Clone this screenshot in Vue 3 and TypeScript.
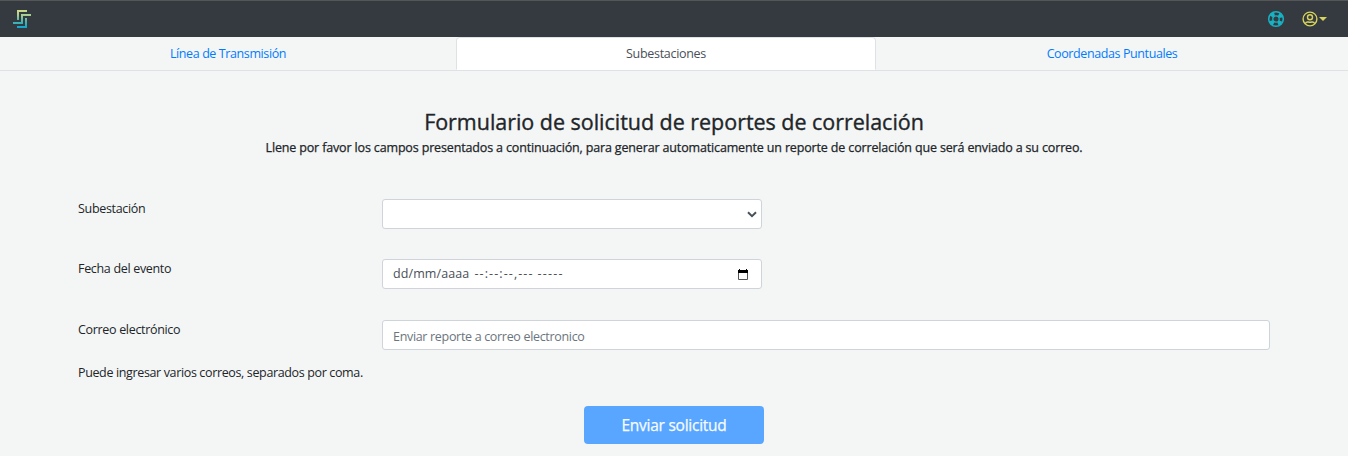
<script setup lang="ts">
import { ref } from 'vue'

interface Tab {
  id: string
  label: string
}

const tabs: Tab[] = [
  { id: 'linea', label: 'Línea de Transmisión' },
  { id: 'subestaciones', label: 'Subestaciones' },
  { id: 'coordenadas', label: 'Coordenadas Puntuales' },
]
const activeTab = ref<string>('subestaciones')
const email = ref<string>('')
</script>

<template>
  <div class="page">
    <header class="navbar">
      <svg class="logo" viewBox="0 0 20 20" width="20" height="20">
        <defs>
          <linearGradient id="brand" x1="0" y1="0" x2="0" y2="20" gradientUnits="userSpaceOnUse">
            <stop offset="0" stop-color="#d9dc80" />
            <stop offset="0.3" stop-color="#a9cf92" />
            <stop offset="0.6" stop-color="#4fb5ac" />
            <stop offset="1" stop-color="#00a5d6" />
          </linearGradient>
        </defs>
        <g fill="none" stroke="url(#brand)" stroke-width="2">
          <path d="M15 2H6V11" />
          <path d="M19 6H10V14H1" />
          <path d="M14 9V18H5" />
        </g>
      </svg>
      <div class="actions">
        <svg class="help" viewBox="0 0 18 18" width="18" height="18" fill="none" stroke="#17b3c4">
          <circle cx="9" cy="9" r="7.300" stroke-width="1.500" />
          <circle cx="9" cy="9" r="3.200" stroke-width="1.300" />
          <circle cx="9" cy="9" r="5.300" stroke-width="3.400" stroke-dasharray="3.900 4.425" stroke-dashoffset="-2.210" />
        </svg>
        <div class="user">
          <svg viewBox="0 0 16 16" width="16" height="16" fill="none" stroke="#d8d35c" stroke-width="1.400">
            <circle cx="8" cy="8" r="6.900" />
            <circle cx="8" cy="6.200" r="2.500" />
            <path d="M3.200 12.800C4 11 5.400 10.800 6.300 11c1.200.3 2.200.3 3.400 0 .9-.2 2.300 0 3.100 1.800" />
          </svg>
          <span class="caret"></span>
        </div>
      </div>
    </header>

    <nav class="tabs">
      <a
        v-for="tab in tabs"
        :key="tab.id"
        :class="['tab', tab.id, { active: tab.id === activeTab }]"
        @click="activeTab = tab.id"
      ><span>{{ tab.label }}</span></a>
    </nav>

    <main class="content">
      <h1><span>Formulario de solicitud de reportes de correlación</span></h1>
      <p class="lead"><span>Llene por favor los campos presentados a continuación, para generar automaticamente un reporte de correlación que será enviado a su correo.</span></p>

      <form class="form" @submit.prevent>
        <div class="row">
          <label for="station"><span>Subestación</span></label>
          <div class="control half">
            <select id="station"></select>
            <svg class="chevron" viewBox="0 0 10 7" width="10" height="7"><path d="M1 1.200L5 5.100L9 1.200" fill="none" stroke="#495057" stroke-width="2" /></svg>
          </div>
        </div>
        <div class="row">
          <label><span>Fecha del evento</span></label>
          <div class="control half date">
            <span class="day">dd/mm/aaaa</span><span class="time">--:--:--,---</span><span class="period">-----</span>
            <svg class="calendar" viewBox="0 0 10 11" width="10" height="11">
              <path d="M.5 2.500h9v8h-9z" fill="none" stroke="#555" />
              <path d="M0 1h10v3H0zM1 0h1v1H1zM8 0h1v1H8z" fill="#000" />
            </svg>
          </div>
        </div>
        <div class="row email-row">
          <label for="email"><span>Correo electrónico</span></label>
          <div class="control"><input id="email" v-model="email" placeholder="Enviar reporte a correo electronico" /></div>
        </div>
        <p class="hint"><span>Puede ingresar varios correos, separados por coma.</span></p>
        <button class="submit"><span>Enviar solicitud</span></button>
      </form>
    </main>
  </div>
</template>

<style>
body {
  margin: 0;
  background: #f4f6f5;
}
</style>

<style scoped>
* {
  box-sizing: border-box;
}
.page {
  height: 456px;
  overflow: hidden;
  background: #f4f6f5;
  color: #212529;
  font: 12.5px/20px 'Open Sans', 'Noto Sans', sans-serif;
}
.navbar {
  display: flex;
  justify-content: space-between;
  align-items: center;
  height: 37px;
  padding: 0 21px 0 12px;
  background: #343a40;
  border-top: 1px solid #555756;
}
.logo {
  display: block;
}
.actions,
.user {
  display: flex;
  align-items: center;
}
.actions {
  gap: 17px;
}
.user {
  gap: 1px;
  margin-top: -1px;
}
.caret {
  border: 4px solid transparent;
  border-top: 4px solid #d8d35c;
  border-bottom: 0;
}
.tabs {
  display: grid;
  grid-template-columns: 456px 420px 1fr;
  height: 34px;
  border-bottom: 1px solid #dee2e6;
}
.tab {
  display: flex;
  justify-content: center;
  height: 33px;
  padding-top: 6px;
  border: 1px solid transparent;
  color: #007bff;
  cursor: pointer;
  white-space: nowrap;
  letter-spacing: -0.4px;
}
.tab.active {
  color: #495057;
  background: #fff;
  border-color: #dee2e6;
  border-bottom-color: #fff;
  border-radius: 4px 4px 0 0;
  letter-spacing: -0.3px;
}
label,
.hint {
  letter-spacing: -0.32px;
}
.content {
  padding: 36px 78px 0;
}
h1,
p {
  margin: 0;
  white-space: nowrap;
}
h1 {
  height: 30px;
  display: flex;
  justify-content: center;
  font-size: 21.5px;
  line-height: 29px;
  font-weight: 500;
  letter-spacing: -0.03px;
  -webkit-text-stroke: 0.35px currentColor;
}
.lead {
  display: flex;
  justify-content: center;
  height: 20px;
  margin-bottom: 42px;
  padding-top: 1px;
  font-weight: 500;
  letter-spacing: -0.15px;
  -webkit-text-stroke: 0.25px currentColor;
}
.row {
  display: grid;
  grid-template-columns: 304px 1fr;
  height: 60px;
}
.email-row {
  height: 42px;
  margin-top: 1px;
}
.control {
  display: flex;
  align-items: center;
  height: 30px;
  padding: 0 10px;
  background: #fff;
  border: 1px solid #ced4da;
  border-radius: 3px;
}
.half {
  width: 380px;
}
select,
input {
  appearance: none;
  flex: 1;
  min-width: 0;
  height: 28px;
  padding: 2px 0 0;
  border: 0;
  outline: 0;
  background: transparent;
  color: #495057;
  font: inherit;
  letter-spacing: -0.32px;
}
input::placeholder {
  color: #6c757d;
  opacity: 1;
}
.chevron {
  margin-right: -6px;
}
.date {
  color: #495057;
}
.day {
  letter-spacing: 0.1px;
}
.time {
  margin-left: 5px;
  letter-spacing: 1.1px;
}
.period {
  margin-left: 4px;
  letter-spacing: 1.2px;
}
.calendar {
  margin-left: auto;
  margin-right: 3px;
}
.hint {
  height: 20px;
  padding-top: 1px;
  letter-spacing: -0.36px;
}
.submit {
  display: flex;
  justify-content: center;
  align-items: center;
  width: 180px;
  height: 38px;
  margin: 24px auto 0;
  padding: 0;
  border: 0;
  border-radius: 4px;
  background: #58a6ff;
  color: #f7fbff;
  font: 500 15.5px/24px 'Open Sans', 'Noto Sans', sans-serif;
  letter-spacing: -0.25px;
  -webkit-text-stroke: 0.25px currentColor;
}
</style>
